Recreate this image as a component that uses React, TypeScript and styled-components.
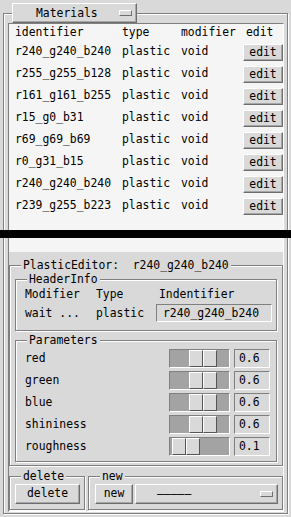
import React from "react";
import styled, { createGlobalStyle } from "styled-components";

type Material = { id: string; type: string; modifier: string };

const materials: Material[] = [
  { id: "r240_g240_b240", type: "plastic", modifier: "void" },
  { id: "r255_g255_b128", type: "plastic", modifier: "void" },
  { id: "r161_g161_b255", type: "plastic", modifier: "void" },
  { id: "r15_g0_b31", type: "plastic", modifier: "void" },
  { id: "r69_g69_b69", type: "plastic", modifier: "void" },
  { id: "r0_g31_b15", type: "plastic", modifier: "void" },
  { id: "r240_g240_b240", type: "plastic", modifier: "void" },
  { id: "r239_g255_b223", type: "plastic", modifier: "void" },
];

const params = [
  { name: "red", value: 0.6 },
  { name: "green", value: 0.6 },
  { name: "blue", value: 0.6 },
  { name: "shininess", value: 0.6 },
  { name: "roughness", value: 0.1 },
];

const GlobalStyle = createGlobalStyle`
  html, body { margin: 0; padding: 0; background: #d9d9d9; }
  body {
    font-family: "DejaVu Sans Mono", "Liberation Mono", monospace;
    font-size: 11.4px;
    color: #000;
  }
  * { box-sizing: border-box; }
`;

const Window = styled.div`
  position: relative;
  width: 291px;
  height: 517px;
  padding: 3px;
  background: #d9d9d9;
  overflow: hidden;
`;

// tk style groove frame
const Group = styled.fieldset<{ $fill?: boolean }>`
  margin: 0;
  padding: 0;
  min-width: 0;
  height: ${(p) => (p.$fill ? "100%" : "auto")};
  border: 1px solid #7f7f7f;
  box-shadow: 1px 1px 0 #fff, inset 1px 1px 0 #fff;
`;

const Caption = styled.legend`
  margin-left: 11px;
  padding: 0 2px;
  line-height: 14px;
  background: #d9d9d9;
  white-space: pre;
`;

const MenuLegend = styled.legend`
  margin-left: 8px;
  padding: 0;
`;

const Raised = styled.div`
  background: #d9d9d9;
  border: 1px solid;
  border-color: #fff #6e6e6e #6e6e6e #fff;
  box-shadow: inset -1px -1px 0 #a6a6a6;
`;

const MenuButton = styled(Raised)`
  display: flex;
  align-items: center;
  width: 125px;
  height: 20px;
  padding: 0 4px 0 23px;
`;

const Indicator = styled.span`
  margin-left: auto;
  width: 13px;
  height: 6px;
  border: 1px solid;
  border-color: #fff #6e6e6e #6e6e6e #fff;
`;

const Panel = styled.div`
  margin: 0 3px 0 4px;
  padding-bottom: 1px;
  border: 1px solid;
  border-color: #7f7f7f #fff #fff #7f7f7f;
`;

const List = styled.div`
  height: 228px;
  padding-left: 6px;
  background: #f5f5f5;
`;

const ListRow = styled.div<{ $head?: boolean }>`
  display: grid;
  grid-template-columns: 107px 59px 62px 40px;
  height: ${(p) => (p.$head ? 16 : 22)}px;
  align-items: center;
  white-space: nowrap;
`;

const EditHead = styled.span`
  padding-left: 3px;
`;

const TkButton = styled.button<{ $w: number; $h: number }>`
  width: ${(p) => p.$w}px;
  height: ${(p) => p.$h}px;
  padding: 0;
  font: inherit;
  color: #000;
  background: #d9d9d9;
  border: 1px solid;
  border-color: #fff #6e6e6e #6e6e6e #fff;
  box-shadow: inset -1px -1px 0 #a6a6a6;
  line-height: 1;
`;

const EditButton = styled(TkButton)`
  align-self: end;
  margin-bottom: 1px;
`;

const Divider = styled.div`
  position: absolute;
  left: 0;
  top: 230px;
  width: 291px;
  height: 8px;
  background: #000;
`;

const Editor = styled.div`
  padding-top: 6px;
  display: flex;
  flex-direction: column;
  gap: 3px;
`;

const EditorBody = styled.div`
  padding: 0 5px 3px 5px;
  display: flex;
  flex-direction: column;
  gap: 2px;
`;

const InfoGrid = styled.div`
  display: grid;
  grid-template-columns: 71px 60px 1fr;
  grid-template-rows: 16px 20px;
  row-gap: 1px;
  align-items: center;
  padding: 0 4px 7px 9px;
  white-space: pre;
`;

const ColHead = styled.span<{ $indent?: number }>`
  padding-left: ${(p) => p.$indent ?? 0}px;
`;

const Sunken = styled.div<{ $w: number; $h: number }>`
  display: flex;
  align-items: center;
  width: ${(p) => p.$w}px;
  height: ${(p) => p.$h}px;
  background: #d9d9d9;
  border: 1px solid;
  border-color: #7f7f7f #fff #fff #7f7f7f;
`;

const EntryText = styled.span<{ $pad: number }>`
  padding-left: ${(p) => p.$pad}px;
`;

const ParamList = styled.div`
  padding: 0 6px 4px 9px;
`;

const ParamRow = styled.div`
  display: grid;
  grid-template-columns: 1fr 61px 36px;
  column-gap: 4px;
  height: 22px;
  align-items: center;
`;

const Trough = styled.div`
  display: flex;
  width: 61px;
  height: 19px;
  background: #a3a3a3;
  border: 1px solid;
  border-color: #7f7f7f #fff #fff #7f7f7f;
`;

const Thumb = styled.div`
  display: flex;
  width: 28px;
  height: 100%;
`;

const ThumbHalf = styled.div`
  flex: 1;
  background: #d9d9d9;
  border: 1px solid;
  border-color: #fff #555 #555 #fff;
`;

const BottomRow = styled.div`
  display: flex;
  gap: 3px;
`;

const ActionBody = styled.div<{ $left: number }>`
  display: flex;
  gap: 2px;
  padding: 1px 4px 5px ${(p) => p.$left}px;
`;

const OptionMenu = styled(Raised)`
  display: flex;
  align-items: center;
  flex: 1;
  height: 20px;
  padding: 0 4px 0 21px;
`;

function Slider({ value }: { value: number }) {
  const offset = Math.min(31, Math.max(0, Math.round(value * 34 - 1)));
  return (
    <Trough>
      <Thumb style={{ marginLeft: offset }}>
        <ThumbHalf />
        <ThumbHalf />
      </Thumb>
    </Trough>
  );
}

export default function App() {
  return (
    <>
      <GlobalStyle />
      <Window>
        <Group $fill>
          <MenuLegend>
            <MenuButton>
              Materials
              <Indicator />
            </MenuButton>
          </MenuLegend>
          <Panel>
            <List>
              <ListRow $head>
                <span>identifier</span>
                <span>type</span>
                <span>modifier</span>
                <EditHead>edit</EditHead>
              </ListRow>
              {materials.map((m, i) => (
                <ListRow key={i}>
                  <span>{m.id}</span>
                  <span>{m.type}</span>
                  <span>{m.modifier}</span>
                  <EditButton $w={40} $h={17}>edit</EditButton>
                </ListRow>
              ))}
            </List>
            <Editor>
              <Group>
                <Caption>{"PlasticEditor:  r240_g240_b240"}</Caption>
                <EditorBody>
                  <Group>
                    <Caption>HeaderInfo</Caption>
                    <InfoGrid>
                      <span>Modifier</span>
                      <span>Type</span>
                      <ColHead $indent={3}>Indentifier</ColHead>
                      <span>wait ...</span>
                      <span>plastic</span>
                      <Sunken $w={116} $h={18}>
                        <EntryText $pad={6}>r240_g240_b240</EntryText>
                      </Sunken>
                    </InfoGrid>
                  </Group>
                  <Group>
                    <Caption>Parameters</Caption>
                    <ParamList>
                      {params.map((p) => (
                        <ParamRow key={p.name}>
                          <span>{p.name}</span>
                          <Slider value={p.value} />
                          <Sunken $w={36} $h={19}>
                            <EntryText $pad={4}>{p.value.toFixed(1)}</EntryText>
                          </Sunken>
                        </ParamRow>
                      ))}
                    </ParamList>
                  </Group>
                </EditorBody>
              </Group>
              <BottomRow>
                <Group style={{ width: 76 }}>
                  <Caption>delete</Caption>
                  <ActionBody $left={5}>
                    <TkButton $w={66} $h={20}>delete</TkButton>
                  </ActionBody>
                </Group>
                <Group style={{ flex: 1 }}>
                  <Caption>new</Caption>
                  <ActionBody $left={6}>
                    <TkButton $w={38} $h={20}>new</TkButton>
                    <OptionMenu>
                      —————
                      <Indicator />
                    </OptionMenu>
                  </ActionBody>
                </Group>
              </BottomRow>
            </Editor>
          </Panel>
        </Group>
        <Divider />
      </Window>
    </>
  );
}
